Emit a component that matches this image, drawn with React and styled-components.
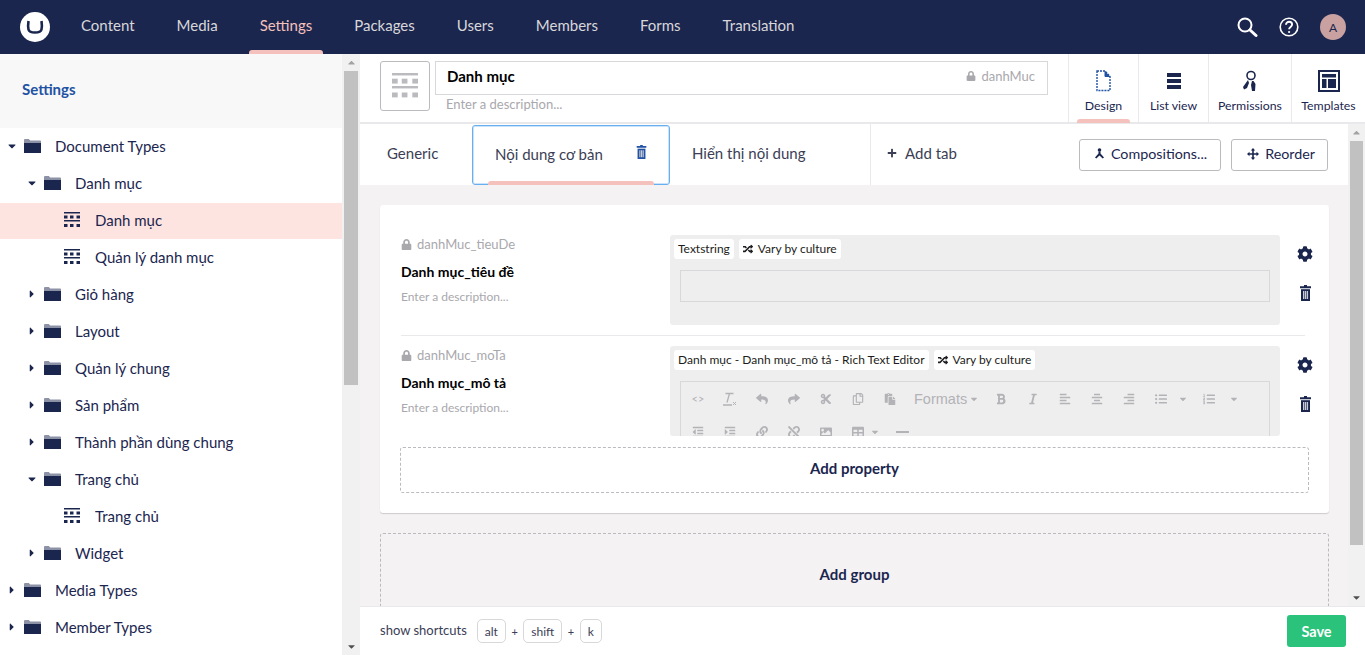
import React from "react";
import styled, { createGlobalStyle } from "styled-components";
import {
	FaAlignCenter,
	FaAlignLeft,
	FaAlignRight,
	FaBold,
	FaCaretDown,
	FaCaretRight,
	FaCaretUp,
	FaCog,
	FaCut,
	FaImage,
	FaIndent,
	FaItalic,
	FaLink,
	FaListOl,
	FaListUl,
	FaLock,
	FaOutdent,
	FaPaste,
	FaPlus,
	FaRandom,
	FaRegCopy,
	FaReply,
	FaShare,
	FaTable,
	FaUnlink,
} from "react-icons/fa";

const navy = "#1b264f";
const pink = "#f5c1bc";

const GlobalStyle = createGlobalStyle`
	html, body {
		margin: 0;
		height: 100%;
		overflow: hidden;
	}
	body {
		font-family: Lato, "Noto Sans", sans-serif;
		color: ${navy};
	}
	* {
		box-sizing: border-box;
	}
`;

const Page = styled.div`
	display: flex;
	flex-direction: column;
	width: 1365px;
	height: 655px;
	overflow: hidden;
`;

const TopBar = styled.header`
	display: flex;
	align-items: center;
	flex: 0 0 54px;
	height: 54px;
	padding-left: 20px;
	background: ${navy};
`;

const Logo = styled.div`
	display: flex;
	align-items: center;
	justify-content: center;
	width: 30px;
	height: 30px;
	margin-right: 31px;
	border-radius: 50%;
	background: #fff;
`;

const NavItem = styled.div`
	position: relative;
	height: 54px;
	margin-right: 42px;
	font-size: 15px;
	line-height: 51px;
	color: ${(p) => (p.$active ? pink : "#d8d7d9")};

	${(p) =>
		p.$active &&
		`
		&::after {
			content: "";
			position: absolute;
			left: -11px;
			right: -11px;
			bottom: 0;
			height: 4px;
			border-radius: 3px 3px 0 0;
			background: ${pink};
		}
	`}
`;

const TopTools = styled.div`
	display: flex;
	align-items: center;
	gap: 21px;
	margin-left: auto;
	padding-right: 19px;
	color: #fff;
`;

const Avatar = styled.div`
	display: flex;
	align-items: center;
	justify-content: center;
	width: 26px;
	height: 26px;
	border-radius: 50%;
	background: #c9a1a1;
	font-size: 12px;
	color: ${navy};
`;

const Body = styled.div`
	display: flex;
	flex: 1;
	min-height: 0;
`;

const Sidebar = styled.aside`
	display: flex;
	flex: 0 0 360px;
	background: #fff;
`;

const SidebarMain = styled.div`
	flex: 1;
	min-width: 0;
	overflow: hidden;
`;

const SidebarHeading = styled.div`
	height: 74px;
	padding-left: 22px;
	background: #f8f8f8;
	font-size: 15px;
	font-weight: 700;
	line-height: 71px;
	color: #2152a3;
`;

const TreeRow = styled.div`
	display: flex;
	align-items: center;
	height: 37px;
	padding-left: ${(p) => p.$level * 20 + 8}px;
	padding-bottom: 3px;
	border-top: 1px solid transparent;
	background: ${(p) => (p.$selected ? "#fee4e1" : "transparent")};
	background-clip: padding-box;
	font-size: 15px;
	color: ${navy};
`;

const Caret = styled.span`
	display: flex;
	align-items: center;
	justify-content: center;
	flex: 0 0 8px;
	width: 8px;
	margin-right: 8px;
	font-size: 12px;
`;

const TreeIcon = styled.span`
	display: flex;
	flex: 0 0 16px;
	min-width: 0;
	margin-right: 15px;
`;

const ScrollTrack = styled.div`
	display: flex;
	flex-direction: column;
	flex: 0 0 ${(p) => p.$width || 17}px;
	width: ${(p) => p.$width || 17}px;
	background: #f1f1f1;
`;

const ScrollArrow = styled.div`
	display: flex;
	align-items: center;
	justify-content: center;
	flex: 0 0 17px;
	font-size: 11px;
	color: ${(p) => (p.$muted ? "#a3a3a3" : "#505050")};
`;

const ScrollThumb = styled.div`
	flex: 0 0 ${(p) => p.$height}px;
	margin: 0 2px;
	background: #c1c1c1;
`;

const ScrollGap = styled.div`
	flex: 1;
`;

const Editor = styled.main`
	display: flex;
	flex-direction: column;
	flex: 1;
	min-width: 0;
	background: #fff;
`;

const EditorHeader = styled.div`
	display: flex;
	flex: 0 0 70px;
	padding-left: 20px;
	border-bottom: 2px solid #e9e9eb;
`;

const IconPicker = styled.div`
	display: flex;
	align-items: center;
	justify-content: center;
	flex: 0 0 50px;
	height: 50px;
	margin: 7px 5px 0 0;
	border: 1px solid #bbbabf;
	border-radius: 3px;
`;

const NameColumn = styled.div`
	flex: 0 0 613px;
	padding-top: 7px;
`;

const NameInput = styled.div`
	display: flex;
	align-items: center;
	justify-content: space-between;
	height: 34px;
	padding: 0 12px 5px 11px;
	border: 1px solid #d8d7d9;
	font-size: 15px;
	font-weight: 700;
	color: #000;
`;

const Alias = styled.span`
	display: flex;
	align-items: center;
	gap: 5px;
	font-size: 13px;
	font-weight: 400;
	color: #a9a8ad;
`;

const Description = styled.div`
	font-size: 13px;
	color: #a9a8ad;
`;

const HeaderDescription = styled(Description)`
	padding: 1px 0 0 11px;
	line-height: 17px;
`;

const Apps = styled.div`
	display: flex;
	margin-left: 20px;
`;

const AppTab = styled.div`
	position: relative;
	display: flex;
	flex-direction: column;
	align-items: center;
	width: ${(p) => p.$width}px;
	padding-top: 16px;
	border-left: 1px solid #e9e9eb;
	font-size: 12.3px;
	color: ${navy};

	svg {
		flex: 0 0 22px;
		margin-bottom: 6px;
	}

	${(p) =>
		p.$active &&
		`
		&::after {
			content: "";
			position: absolute;
			left: 8px;
			right: 8px;
			bottom: -1px;
			height: 4px;
			border-radius: 3px 3px 0 0;
			background: ${pink};
		}
	`}
`;

const EditorMiddle = styled.div`
	display: flex;
	flex: 1;
	min-height: 0;
`;

const EditorScrollArea = styled.div`
	flex: 1;
	min-width: 0;
	overflow: hidden;
	background: #f4f2f3;
`;

const TabBar = styled.div`
	display: flex;
	align-items: stretch;
	height: 61px;
	background: #fff;
`;

const Tab = styled.div`
	display: flex;
	align-items: center;
	width: ${(p) => p.$width}px;
	padding-left: ${(p) => p.$pad}px;
	padding-bottom: 3px;
	font-size: 15px;
	color: #3b3e55;
`;

const ActiveTab = styled(Tab)`
	position: relative;
	justify-content: space-between;
	margin-top: 1px;
	padding-right: 22px;
	border: 1px solid #68aff0;
	border-radius: 3px;
	box-shadow: inset 0 0 0 1px rgba(104, 175, 240, 0.35);
	color: #3b3e55;

	&::after {
		content: "";
		position: absolute;
		left: 15px;
		right: 15px;
		bottom: -1px;
		height: 4px;
		border-radius: 3px 3px 0 0;
		background: ${pink};
	}

	svg {
		margin-bottom: 4px;
	}
`;

const AddTab = styled.div`
	display: flex;
	align-items: center;
	gap: 8px;
	padding-left: 16px;
	padding-bottom: 3px;
	border-left: 1px solid #e9e9eb;
	font-size: 15px;
	color: #3b3e55;
`;

const TabActions = styled.div`
	display: flex;
	align-items: center;
	gap: 10px;
	margin-left: auto;
	padding-right: 20px;
`;

const OutlineButton = styled.div`
	display: flex;
	align-items: center;
	gap: 6px;
	height: 32px;
	padding: 0 ${(p) => p.$right}px 2px ${(p) => p.$left}px;
	border: 1px solid #bbbabf;
	border-radius: 3px;
	font-size: 14.3px;
	color: ${navy};
`;

const Content = styled.div`
	padding: 20px 19px 0 20px;
`;

const Card = styled.section`
	height: 308px;
	padding: 20px 20px 0 21px;
	border-radius: 3px;
	background: #fff;
	box-shadow: 0 1px 1px rgba(0, 0, 0, 0.16);
`;

const PropertyRow = styled.div`
	display: flex;
	width: 904px;
	height: ${(p) => p.$height}px;
	margin-bottom: ${(p) => p.$gap}px;
	border-bottom: ${(p) => (p.$divider ? "1px solid #e9e9eb" : "none")};
`;

const PropertyInfo = styled.div`
	flex: 0 0 269px;
`;

const PropertyAlias = styled(Alias)`
	height: 18px;
	margin-top: 10px;
`;

const PropertyLabel = styled.div`
	margin-top: 10px;
	font-size: 14px;
	font-weight: 700;
	line-height: 18px;
	color: #000;
`;

const PropertyDescription = styled(Description)`
	margin-top: 8px;
	font-size: 12px;
	line-height: 15px;
`;

const Preview = styled.div`
	position: relative;
	flex: 0 0 610px;
	height: ${(p) => p.$height}px;
	margin-top: 10px;
	padding: 4px 4px 0;
	overflow: hidden;
	border-radius: 3px;
	background: #eee;
`;

const Tags = styled.div`
	display: flex;
	gap: 5px;
`;

const Tag = styled.span`
	display: flex;
	align-items: center;
	gap: 5px;
	height: 20px;
	padding: 0 4px 1px;
	border-radius: 3px;
	background: #fff;
	font-size: 12px;
	color: #1d1d20;
`;

const FakeInput = styled.div`
	height: 32px;
	margin: 11px 6px 0;
	border: 1px solid #d8d7d9;
`;

const FakeEditor = styled.div`
	margin: 11px 6px 0;
	border: 1px solid #d8d7d9;
	height: 90px;
`;

const ToolRow = styled.div`
	display: flex;
	align-items: center;
	height: 33px;
	padding-left: 1px;
	color: #b3b2b7;
	font-size: 12px;
`;

const Tool = styled.span`
	display: flex;
	align-items: center;
	justify-content: center;
	flex: 0 0 ${(p) => p.$width || 32}px;
	font-size: ${(p) => p.$size || 12}px;
`;

const TableTool = styled.span`
	display: flex;
	align-items: center;
	flex: 0 0 38px;
	gap: 6px;
	padding-left: 10px;
	font-size: 12px;
`;

const RuleTool = styled.span`
	display: flex;
	align-items: center;
	justify-content: center;
	flex: 0 0 44px;

	&::before {
		content: "";
		width: 13px;
		height: 2px;
		background: #b3b2b7;
	}
`;

const FormatsLabel = styled.span`
	display: flex;
	align-items: center;
	flex: 0 0 71px;
	gap: 2px;
	margin-left: 8px;
	font-family: "Liberation Sans", Arial, sans-serif;
	font-size: 14.5px;
	color: #b3b2b7;
`;

const PropertyTools = styled.div`
	display: flex;
	flex-direction: column;
	align-items: center;
	flex: 0 0 50px;
	gap: 23px;
	padding-top: 21px;
	color: ${navy};
`;

const DashedBox = styled.div`
	display: flex;
	align-items: center;
	justify-content: center;
	height: ${(p) => p.$height}px;
	padding-bottom: 3px;
	border: 1px dashed #bbbabf;
	border-radius: 3px;
	font-size: 15px;
	font-weight: 700;
	color: ${navy};
`;

const AddPropertyBox = styled(DashedBox)`
	width: 909px;
	margin-left: -1px;
	padding-bottom: 5px;
`;

const AddGroupBox = styled(DashedBox)`
	margin-top: 20px;
`;

const Footer = styled.footer`
	display: flex;
	align-items: center;
	flex: 0 0 49px;
	padding: 0 19px 0 20px;
	border-top: 1px solid #e9e9eb;
	font-size: 13px;
	color: #3b3e55;
`;

const ShortcutLabel = styled.span`
	margin-right: 10px;
	padding-bottom: 2px;
`;

const Key = styled.span`
	display: flex;
	align-items: center;
	height: 24px;
	padding: 0 7px;
	border: 1px solid #d8d7d9;
	border-radius: 5px;
	font-size: 12px;
`;

const Plus = styled.span`
	margin: 0 5.5px;
	font-size: 11px;
`;

const SaveButton = styled.div`
	display: flex;
	align-items: center;
	justify-content: center;
	width: 59px;
	height: 32px;
	margin-left: auto;
	border-radius: 3px;
	background: #2bc37c;
	font-size: 14.5px;
	font-weight: 700;
	color: #fff;
`;

const FolderIcon = () => (
	<svg width="17" height="14" viewBox="0 0 17 14" style={{ flexShrink: 0 }}>
		<path d="M0 3V1.2C0 .5.5 0 1.200 0h3.600l1.400 1.500H16c.5 0 1 .4 1 1V3z" fill="#8d92a7" />
		<rect y="3.500" width="17" height="10.500" fill={navy} />
	</svg>
);

const DocTypeIcon = ({ size = 16, color = navy }) => (
	<svg width={size} height={size} viewBox="0 0 16 16" fill={color}>
		<rect x="0" y="0" width="16" height="1.500" />
		<rect x="0" y="3.500" width="3.500" height="3" />
		<rect x="6" y="3.500" width="3.500" height="3" />
		<rect x="12.500" y="3.500" width="3.500" height="3" />
		<rect x="0" y="8" width="16" height="1.500" />
		<rect x="0" y="12" width="3.500" height="3" />
		<rect x="6" y="12" width="3.500" height="3" />
		<rect x="12.500" y="12" width="3.500" height="3" />
	</svg>
);

const TrashIcon = ({ width = 11, height = 16, color = navy }) => (
	<svg width={width} height={height} viewBox="0 0 11 16">
		<path d="M4 0h3v1.200h4V3.200H0V1.200h4z" fill={color} />
		<path d="M1 4.200h9V16H1z" fill={color} />
		<path d="M3 6h1.300v8H3zM4.900 6h1.300v8H4.900zM6.800 6h1.300v8H6.800z" fill="#c9ccd6" />
	</svg>
);

const SearchIcon = () => (
	<svg width="22" height="22" viewBox="0 0 22 22" fill="none" stroke="#fff">
		<circle cx="9" cy="9" r="6.500" strokeWidth="2" />
		<path d="M14 14l6 5.500" strokeWidth="3" strokeLinecap="round" />
	</svg>
);

const HelpIcon = () => (
	<svg width="20" height="20" viewBox="0 0 20 20" fill="none" stroke="#fff" strokeWidth="1.600">
		<circle cx="10" cy="10" r="8.800" />
		<path d="M7 7.800c0-1.800 1.400-3 3.100-3s3 1.100 3 2.700c0 2.400-3 2.400-3 4.700" strokeWidth="1.900" />
		<circle cx="10.100" cy="15" r="1.100" fill="#fff" stroke="none" />
	</svg>
);

const DesignIcon = () => (
	<svg width="15" height="22" viewBox="0 0 15 22" fill="none" stroke="#2152a3">
		<path d="M1 1h8l5 5.500V20.500H1z" strokeWidth="1.400" strokeDasharray="2 1" />
		<path d="M9 1v5.500h5" fill="#2152a3" strokeWidth="1" />
	</svg>
);

const ListIcon = () => (
	<svg width="14" height="22" viewBox="0 0 14 22" fill={navy}>
		<rect y="3" width="14" height="4" />
		<rect y="9" width="14" height="4" />
		<rect y="15" width="14" height="4" />
	</svg>
);

const KeysIcon = () => (
	<svg width="16" height="22" viewBox="0 0 16 22" fill={navy}>
		<circle cx="9" cy="5.500" r="4" fill="none" stroke={navy} strokeWidth="1.600" />
		<path d="M6 10l-5 7 1 2.500 3-1.500 2-5zM10 11l-1 4 1 6h3l.5-7-2-3z" />
	</svg>
);

const TemplatesIcon = () => (
	<svg width="22" height="22" viewBox="0 0 22 22" fill={navy}>
		<path d="M0 0h22v22H0zM2 2v18h18V2z" />
		<rect x="4" y="4" width="14" height="3.500" />
		<rect x="4" y="9" width="4.500" height="9" />
		<rect x="10" y="9" width="8" height="9" />
	</svg>
);

const CompositionIcon = () => (
	<svg width="11" height="11" viewBox="0 0 11 11" fill={navy}>
		<circle cx="5.500" cy="2" r="1.800" />
		<path d="M4.500 3.500h2v2l3.500 4-1.300 1-3.200-3-3.200 3-1.300-1 3.500-4z" />
	</svg>
);

const MoveIcon = () => (
	<svg width="12" height="12" viewBox="0 0 12 12" fill={navy}>
		<path d="M6 0l2.200 2.500H6.800v2.700h2.700V3.800L12 6 9.500 8.200V6.800H6.800v2.700h1.400L6 12 3.800 9.500h1.400V6.800H2.500v1.400L0 6l2.500-2.200v1.400h2.700V2.500H3.800z" />
	</svg>
);

const ClearFormatIcon = () => (
	<svg width="14" height="14" viewBox="0 0 14 14" fill="none" stroke="#b3b2b7" strokeWidth="1.300">
		<path d="M2.500 1.500h8M6.500 1.500L4 10.500M0 13h9" />
		<path d="M10 10l3 3M13 10l-3 3" strokeWidth="1" />
	</svg>
);

const treeItems = [
	{ label: "Document Types", level: 0, open: true, folder: true },
	{ label: "Danh mục", level: 1, open: true, folder: true },
	{ label: "Danh mục", level: 2, selected: true },
	{ label: "Quản lý danh mục", level: 2 },
	{ label: "Giỏ hàng", level: 1, folder: true },
	{ label: "Layout", level: 1, folder: true },
	{ label: "Quản lý chung", level: 1, folder: true },
	{ label: "Sản phẩm", level: 1, folder: true },
	{ label: "Thành phần dùng chung", level: 1, folder: true },
	{ label: "Trang chủ", level: 1, open: true, folder: true },
	{ label: "Trang chủ", level: 2 },
	{ label: "Widget", level: 1, folder: true },
	{ label: "Media Types", level: 0, folder: true },
	{ label: "Member Types", level: 0, folder: true },
];

const navItems = ["Content", "Media", "Settings", "Packages", "Users", "Members", "Forms", "Translation"];

const App = () => {
	return (
		<Page>
			<GlobalStyle />
			<TopBar>
				<Logo>
					<svg width="18" height="14" viewBox="0 0 18 14" fill="none" stroke={navy} strokeWidth="2.600">
						<path d="M2.500 1c-.6 4-.6 6 0 8.500.5 2 2.500 3 6.500 3s6-1 6.500-3c.6-2.500.6-4.500 0-8.500" />
					</svg>
				</Logo>
				{navItems.map((item) => (
					<NavItem key={item} $active={item === "Settings"}>
						{item}
					</NavItem>
				))}
				<TopTools>
					<SearchIcon />
					<HelpIcon />
					<Avatar>A</Avatar>
				</TopTools>
			</TopBar>
			<Body>
				<Sidebar>
					<SidebarMain>
						<SidebarHeading>Settings</SidebarHeading>
						{treeItems.map((item, index) => (
							<TreeRow key={index} $level={item.level} $selected={item.selected}>
								<Caret>
									{item.folder && (item.open ? <FaCaretDown /> : <FaCaretRight />)}
								</Caret>
								<TreeIcon>{item.folder ? <FolderIcon /> : <DocTypeIcon />}</TreeIcon>
								{item.label}
							</TreeRow>
						))}
					</SidebarMain>
					<ScrollTrack $width={18}>
						<ScrollArrow $muted>
							<FaCaretUp />
						</ScrollArrow>
						<ScrollThumb $height={314} />
						<ScrollGap />
						<ScrollArrow>
							<FaCaretDown />
						</ScrollArrow>
					</ScrollTrack>
				</Sidebar>
				<Editor>
					<EditorHeader>
						<IconPicker>
							<DocTypeIcon size={26} color="#bbbabf" />
						</IconPicker>
						<NameColumn>
							<NameInput>
								Danh mục
								<Alias>
									<FaLock size={10} />
									danhMuc
								</Alias>
							</NameInput>
							<HeaderDescription>Enter a description...</HeaderDescription>
						</NameColumn>
						<Apps>
							<AppTab $width={70} $active>
								<DesignIcon />
								Design
							</AppTab>
							<AppTab $width={70}>
								<ListIcon />
								List view
							</AppTab>
							<AppTab $width={83}>
								<KeysIcon />
								Permissions
							</AppTab>
							<AppTab $width={74}>
								<TemplatesIcon />
								Templates
							</AppTab>
						</Apps>
					</EditorHeader>
					<EditorMiddle>
						<EditorScrollArea>
							<TabBar>
								<Tab $width={112} $pad={27}>
									Generic
								</Tab>
								<ActiveTab $width={198} $pad={22}>
									Nội dung cơ bản
									<TrashIcon width={11} height={14} color="#2152a3" />
								</ActiveTab>
								<Tab $width={200} $pad={22}>
									Hiển thị nội dung
								</Tab>
								<AddTab>
									<FaPlus size={10} />
									Add tab
								</AddTab>
								<TabActions>
									<OutlineButton $left={14} $right={13}>
										<CompositionIcon />
										Compositions...
									</OutlineButton>
									<OutlineButton $left={15} $right={12}>
										<MoveIcon />
										Reorder
									</OutlineButton>
								</TabActions>
							</TabBar>
							<Content>
								<Card>
									<PropertyRow $height={111} $gap={0} $divider>
										<PropertyInfo>
											<PropertyAlias>
												<FaLock size={11} />
												danhMuc_tieuDe
											</PropertyAlias>
											<PropertyLabel>Danh mục_tiêu đề</PropertyLabel>
											<PropertyDescription>Enter a description...</PropertyDescription>
										</PropertyInfo>
										<Preview $height={90}>
											<Tags>
												<Tag>Textstring</Tag>
												<Tag>
													<FaRandom size={10} />
													Vary by culture
												</Tag>
											</Tags>
											<FakeInput />
										</Preview>
										<PropertyTools>
											<FaCog size={16} />
											<TrashIcon />
										</PropertyTools>
									</PropertyRow>
									<PropertyRow $height={100} $gap={11}>
										<PropertyInfo>
											<PropertyAlias>
												<FaLock size={11} />
												danhMuc_moTa
											</PropertyAlias>
											<PropertyLabel>Danh mục_mô tả</PropertyLabel>
											<PropertyDescription>Enter a description...</PropertyDescription>
										</PropertyInfo>
										<Preview $height={90}>
											<Tags>
												<Tag>Danh mục - Danh mục_mô tả - Rich Text Editor</Tag>
												<Tag>
													<FaRandom size={10} />
													Vary by culture
												</Tag>
											</Tags>
											<FakeEditor>
												<ToolRow>
													<Tool $size={11}>&lt;&gt;</Tool>
													<Tool>
														<ClearFormatIcon />
													</Tool>
													<Tool>
														<FaReply />
													</Tool>
													<Tool>
														<FaShare />
													</Tool>
													<Tool>
														<FaCut />
													</Tool>
													<Tool>
														<FaRegCopy />
													</Tool>
													<Tool>
														<FaPaste />
													</Tool>
													<FormatsLabel>
														Formats
														<FaCaretDown size={10} />
													</FormatsLabel>
													<Tool>
														<FaBold />
													</Tool>
													<Tool>
														<FaItalic />
													</Tool>
													<Tool>
														<FaAlignLeft />
													</Tool>
													<Tool>
														<FaAlignCenter />
													</Tool>
													<Tool>
														<FaAlignRight />
													</Tool>
													<Tool>
														<FaListUl />
													</Tool>
													<Tool $width={12} $size={10}>
														<FaCaretDown />
													</Tool>
													<Tool $width={40}>
														<FaListOl />
													</Tool>
													<Tool $width={8} $size={10}>
														<FaCaretDown />
													</Tool>
												</ToolRow>
												<ToolRow>
													<Tool>
														<FaOutdent />
													</Tool>
													<Tool>
														<FaIndent />
													</Tool>
													<Tool>
														<FaLink />
													</Tool>
													<Tool>
														<FaUnlink />
													</Tool>
													<Tool>
														<FaImage />
													</Tool>
													<TableTool>
														<FaTable />
														<FaCaretDown size={10} />
													</TableTool>
													<RuleTool />
												</ToolRow>
											</FakeEditor>
										</Preview>
										<PropertyTools>
											<FaCog size={16} />
											<TrashIcon />
										</PropertyTools>
									</PropertyRow>
									<AddPropertyBox $height={46}>Add property</AddPropertyBox>
								</Card>
								<AddGroupBox $height={84}>Add group</AddGroupBox>
							</Content>
						</EditorScrollArea>
						<ScrollTrack>
							<ScrollArrow $muted>
								<FaCaretUp />
							</ScrollArrow>
							<ScrollThumb $height={404} />
							<ScrollGap />
							<ScrollArrow>
								<FaCaretDown />
							</ScrollArrow>
						</ScrollTrack>
					</EditorMiddle>
					<Footer>
						<ShortcutLabel>show shortcuts</ShortcutLabel>
						<Key>alt</Key>
						<Plus>+</Plus>
						<Key>shift</Key>
						<Plus>+</Plus>
						<Key>k</Key>
						<SaveButton>Save</SaveButton>
					</Footer>
				</Editor>
			</Body>
		</Page>
	);
};

export default App;
